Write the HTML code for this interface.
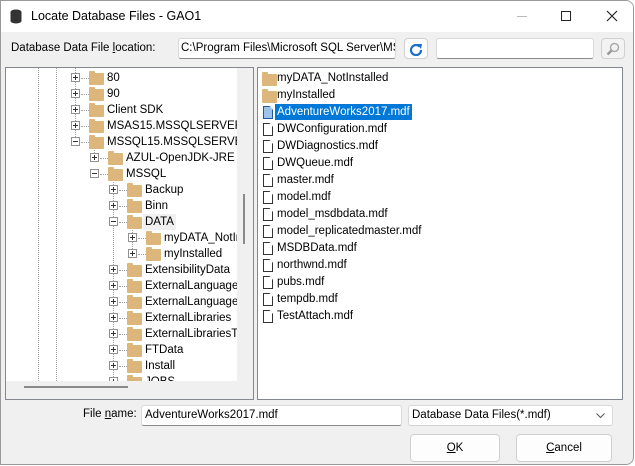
<!DOCTYPE html>
<html><head><style>
*{box-sizing:border-box;margin:0;padding:0}
body{width:635px;height:466px;overflow:hidden;background:#fff;font-family:"Liberation Sans",sans-serif;font-size:11.5px;color:#000;position:relative}
.win{position:absolute;left:0;top:0;width:634px;height:465px;background:#f0f0f0;border:1px solid #9a9a9a;border-radius:0 8px 8px 0;overflow:hidden}
.title{position:absolute;left:0;top:0;width:100%;height:31px;background:#fff}
.abs{position:absolute;white-space:nowrap}
.inp{position:absolute;background:#fff;border:1px solid #d9d9d9;border-bottom:1px solid #8a8a8a;border-radius:3px}
.btn{position:absolute;background:#fdfdfd;border:1px solid #d0d0d0;border-radius:4px;text-align:center}
.panel{position:absolute;background:#fff;border:1px solid #828790}
.row{position:absolute;height:16px;line-height:16px;white-space:nowrap}
.fold{position:absolute;width:15px;height:12px;background:#dcb67a;border-radius:1px}
.fold:before{content:"";position:absolute;left:0;top:-2px;width:6px;height:3px;background:#dcb67a;border-radius:1px 1px 0 0}
.exp{position:absolute;width:9px;height:9px;border:1px solid #919191;background:#fff}
.exp:before{content:"";position:absolute;left:1px;top:3px;width:5px;height:1px;background:#333}
.exp.p:after{content:"";position:absolute;left:3px;top:1px;width:1px;height:5px;background:#333}
.dh{position:absolute;width:8px;border-top:1px dotted #a0a0a0}
.dv{position:absolute;border-left:1px dotted #a0a0a0}
.file{position:absolute;width:10px;height:13px;border:1px solid #333;background:#fff;clip-path:polygon(0 0,65% 0,100% 30%,100% 100%,0 100%)}
</style></head><body>
<div class="win">
<div class="title">
 <svg class="abs" style="left:9px;top:8px" width="12" height="15"><ellipse cx="6" cy="3" rx="5.5" ry="2.5" fill="#333"/><rect x="0.5" y="3" width="11" height="9" fill="#333"/><ellipse cx="6" cy="12" rx="5.5" ry="2.5" fill="#333"/></svg>
 <div class="abs" style="left:30px;top:8px;font-size:12.5px">Locate Database Files - GAO1</div>
 <div class="abs" style="left:516px;top:15px;width:10px;border-top:1px solid #bbb"></div>
 <div class="abs" style="left:560px;top:10px;width:10px;height:10px;border:1px solid #222"></div>
 <svg class="abs" style="left:605px;top:9px" width="12" height="12"><path d="M1 1L11 11M11 1L1 11" stroke="#222" stroke-width="1.2"/></svg>
</div>
<div class="abs" style="left:10px;top:41px">Database Data File <u>l</u>ocation:</div>
<div class="inp" style="left:177px;top:37px;width:218px;height:21px;overflow:hidden;padding:3px 2px;white-space:nowrap">C:\Program Files\Microsoft SQL Server\MSSQL15</div>
<div class="btn" style="left:403px;top:37px;width:24px;height:21px"><svg width="14" height="14" style="margin-top:3px"><path d="M10.5 4.5A5 5 0 1 0 12 8" stroke="#1e6fc8" stroke-width="2.2" fill="none"/><path d="M8 2L13 2L12 7Z" fill="#1e6fc8"/></svg></div>
<div class="inp" style="left:435px;top:37px;width:158px;height:21px"></div>
<div class="btn" style="left:600px;top:37px;width:24px;height:21px;background:#f3f3f3"><svg width="14" height="14" style="margin-top:3px"><circle cx="8.5" cy="5.5" r="4" stroke="#aaa" stroke-width="1.5" fill="none"/><path d="M5.5 8.5L1.5 12.5" stroke="#999" stroke-width="2.5"/></svg></div>

<div class="panel" style="left:4px;top:66px;width:249px;height:333px;overflow:hidden">
 <div class="abs" style="left:231px;top:0;width:16px;height:331px;background:#f0f0f0"></div>
 <div class="abs" style="left:237px;top:126px;width:2px;height:50px;background:#8a8a8a"></div>
 <div class="abs" style="left:0;top:313px;width:247px;height:18px;background:#f0f0f0"></div>
 <div class="abs" style="left:18px;top:318px;width:104px;height:2px;background:#8a8a8a"></div>
 <div style="position:absolute;left:0;top:0;width:231px;height:313px;overflow:hidden">
 <div class="dv" style="left:32px;top:0;height:313px"></div>
 <div class="dv" style="left:50px;top:0;height:313px"></div>
 <div class="dv" style="left:69px;top:0;height:75px"></div>
 <div class="dv" style="left:88px;top:75px;height:10px"></div>
 <div class="dv" style="left:107px;top:107px;height:206px"></div>
 <div class="dv" style="left:126px;top:155px;height:30px"></div>
 <div id="tree"></div>
 </div>
</div>

<div class="panel" style="left:256px;top:66px;width:366px;height:333px" id="list"></div>

<div class="abs" style="left:82px;top:407px">File <u>n</u>ame:</div>
<div class="inp" style="left:140px;top:404px;width:261px;height:21px;padding:3px 3px">AdventureWorks2017.mdf</div>
<div class="inp" style="left:407px;top:404px;width:205px;height:21px;padding:3px 3px;border-bottom-color:#d0d0d0">Database Data Files(*.mdf)<svg class="abs" style="right:7px;top:7px" width="9" height="6"><path d="M0.5 0.5L4.5 4.5L8.5 0.5" stroke="#555" fill="none"/></svg></div>
<div class="btn" style="left:409px;top:433px;width:90px;height:28px;line-height:26px"><u>O</u>K</div>
<div class="btn" style="left:515px;top:433px;width:96px;height:28px;line-height:26px"><u>C</u>ancel</div>
</div>
<script>
var t=[[1,'80',1],[1,'90',1],[1,'Client SDK',1],[1,'MSAS15.MSSQLSERVER',1],[1,'MSSQL15.MSSQLSERVER',0],[2,'AZUL-OpenJDK-JRE',1],[2,'MSSQL',0],[3,'Backup',1],[3,'Binn',1],[3,'DATA',0],[4,'myDATA_NotInstalled',1],[4,'myInstalled',1],[3,'ExtensibilityData',1],[3,'ExternalLanguages',1],[3,'ExternalLanguages',1],[3,'ExternalLibraries',1],[3,'ExternalLibrariesTemp',1],[3,'FTData',1],[3,'Install',1],[3,'JOBS',1]];
var h='';t.forEach(function(r,i){var y=2+i*16,x=65+(r[0]-1)*19;
h+='<div class="exp'+(r[2]?' p':'')+'" style="left:'+x+'px;top:'+(y+3)+'px"></div><div class="dh" style="left:'+(x+10)+'px;top:'+(y+8)+'px"></div><div class="fold" style="left:'+(x+18)+'px;top:'+(y+3)+'px"></div><div class="row" style="left:'+(x+36)+'px;top:'+y+'px'+(r[1]=='DATA'?';background:#f0f0f0;padding:0 2px;margin-left:-2px':'')+'">'+r[1]+'</div>';});
document.getElementById('tree').innerHTML=h;
var f=['myDATA_NotInstalled','myInstalled','AdventureWorks2017.mdf','DWConfiguration.mdf','DWDiagnostics.mdf','DWQueue.mdf','master.mdf','model.mdf','model_msdbdata.mdf','model_replicatedmaster.mdf','MSDBData.mdf','northwnd.mdf','pubs.mdf','tempdb.mdf','TestAttach.mdf'];
h='';f.forEach(function(n,i){var y=2+i*17;
h+=(i<2?'<div class="fold" style="left:4px;top:'+(y+4)+'px"></div>':'<div class="file" style="left:5px;top:'+(y+2)+'px'+(i==2?';background:#9cc3ea;border-color:#1e5a9a':'')+'"></div>')+'<div class="row" style="left:17px;top:'+y+'px;padding:0 2px'+(i==2?';background:#0078d7;color:#fff':'')+'">'+n+'</div>';});
document.getElementById('list').innerHTML=h;
</script>
</body></html>
